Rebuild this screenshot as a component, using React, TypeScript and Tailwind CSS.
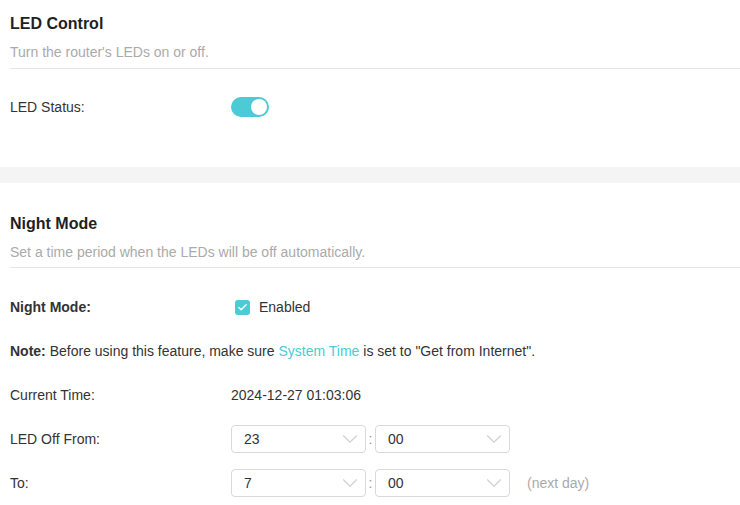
import { Check, ChevronDown } from "lucide-react";

function Row({ label, bold, children }: { label: string; bold?: boolean; children: React.ReactNode }) {
  return (
    <div className="flex h-7 items-center">
      <div className={`w-[221px] shrink-0 ${bold ? "font-bold" : ""}`}>{label}</div>
      <div className="flex items-center">{children}</div>
    </div>
  );
}

function Select({ value }: { value: string }) {
  return (
    <div className="flex h-7 w-[135px] items-center justify-between rounded-[4px] border border-[#d9d9d9] bg-white pl-3 pr-[2px]">
      <span>{value}</span>
      <ChevronDown size={26} strokeWidth={1} className="text-[#d0d0d0]" />
    </div>
  );
}

function TimePick({ h, m }: { h: string; m: string }) {
  return (
    <>
      <Select value={h} />
      <span className="w-[9px] text-center text-[#999]">:</span>
      <Select value={m} />
    </>
  );
}

export default function App() {
  return (
    <div className="min-h-screen bg-white text-[14px] leading-5 text-[#333] font-['Liberation_Sans',Arial,sans-serif]">
      <section className="pl-[10px] pt-[14px] pb-[46px]">
        <h2 className="text-[16px] font-bold leading-5 text-[#1f1f1f]">LED Control</h2>
        <p className="mt-[8px] border-b border-[#e6e6e6] pb-[6px] text-[#aaa]">Turn the router's LEDs on or off.</p>
        <div className="mt-[24px]">
          <Row label="LED Status:">
            <div className="flex h-5 w-[38px] items-center justify-end rounded-full bg-[#4acbd6] pr-[2px]">
              <div className="h-4 w-4 rounded-full bg-white" />
            </div>
          </Row>
        </div>
      </section>

      <div className="h-4 bg-[#f4f4f4]" />

      <section className="pl-[10px] pt-[31px] pb-4">
        <h2 className="text-[16px] font-bold leading-5 text-[#1f1f1f]">Night Mode</h2>
        <p className="mt-[8px] border-b border-[#e6e6e6] pb-[5px] text-[#aaa]">
          Set a time period when the LEDs will be off automatically.
        </p>
        <div className="mt-[25px] flex flex-col gap-4">
          <Row label="Night Mode:" bold>
            <div className="ml-1 flex h-[15px] w-[15px] items-center justify-center rounded-[3px] bg-[#4acbd6]">
              <Check size={11} strokeWidth={3} className="text-white" />
            </div>
            <span className="ml-[9px]">Enabled</span>
          </Row>
          <div className="flex h-7 items-center">
            <span className="font-bold">Note:</span>
            <span>&nbsp;Before using this feature, make sure&nbsp;</span>
            <span className="text-[#4acbd6]">System Time</span>
            <span>&nbsp;is set to "Get from Internet".</span>
          </div>
          <Row label="Current Time:">
            <span>2024-12-27 01:03:06</span>
          </Row>
          <Row label="LED Off From:">
            <TimePick h="23" m="00" />
          </Row>
          <Row label="To:">
            <TimePick h="7" m="00" />
            <span className="ml-[17px] text-[#aaa]">(next day)</span>
          </Row>
        </div>
      </section>
    </div>
  );
}
